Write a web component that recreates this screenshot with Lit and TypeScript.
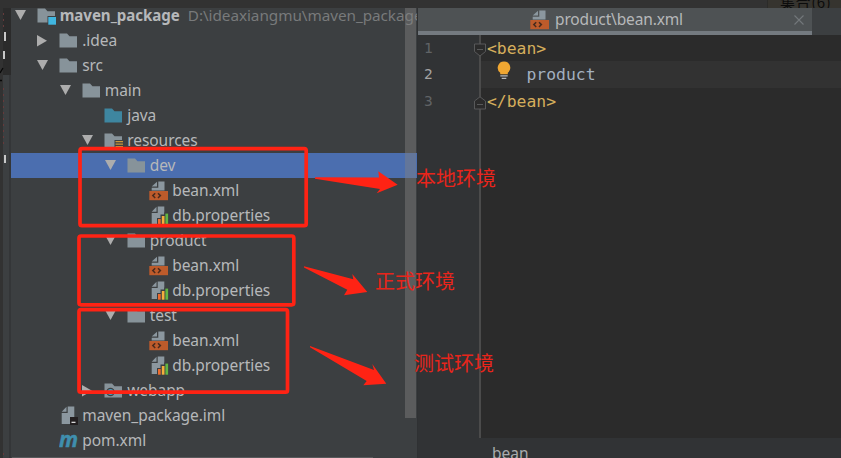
import { LitElement, html, css, svg, nothing } from 'lit';
import { customElement, property } from 'lit/decorators.js';
import { classMap } from 'lit/directives/class-map.js';

type Icon = 'module' | 'folder' | 'source' | 'resources' | 'web' | 'xml' | 'props' | 'iml' | 'maven';

interface Node {
    name: string;
    icon: Icon;
    depth: number;
    arrow?: 'open' | 'closed';
    path?: string;
    selected?: boolean;
}

const NODES: Node[] = [
    { name: 'maven_package', icon: 'module', depth: 0, arrow: 'open', path: 'D:\\ideaxiangmu\\maven_package' },
    { name: '.idea', icon: 'folder', depth: 1, arrow: 'closed' },
    { name: 'src', icon: 'folder', depth: 1, arrow: 'open' },
    { name: 'main', icon: 'folder', depth: 2, arrow: 'open' },
    { name: 'java', icon: 'source', depth: 3 },
    { name: 'resources', icon: 'resources', depth: 3, arrow: 'open' },
    { name: 'dev', icon: 'folder', depth: 4, arrow: 'open', selected: true },
    { name: 'bean.xml', icon: 'xml', depth: 5 },
    { name: 'db.properties', icon: 'props', depth: 5 },
    { name: 'product', icon: 'folder', depth: 4, arrow: 'open' },
    { name: 'bean.xml', icon: 'xml', depth: 5 },
    { name: 'db.properties', icon: 'props', depth: 5 },
    { name: 'test', icon: 'folder', depth: 4, arrow: 'open' },
    { name: 'bean.xml', icon: 'xml', depth: 5 },
    { name: 'db.properties', icon: 'props', depth: 5 },
    { name: 'webapp', icon: 'web', depth: 3, arrow: 'closed' },
    { name: 'maven_package.iml', icon: 'iml', depth: 1 },
    { name: 'pom.xml', icon: 'maven', depth: 1 },
];

const folder = (fill: string) => svg`<path fill=${fill} d="M0.5 2.5H8L10.5 5.2H18V16.5H0.5Z"/>`;
const page = svg`<path fill="#8b979f" d="M8.7 0.5H15.3V18H2.7V7H8.7Z"/><path fill="#8b979f" d="M7.5 0.8V5.7H2.7Z"/>`;

const ICONS: Record<Icon, unknown> = {
    module: svg`${folder('#87939a')}<rect x="10.5" y="10" width="9.5" height="9.5" fill="#3c3f41"/><rect x="11.3" y="11" width="7.7" height="7.7" fill="#40b6e0"/>`,
    folder: folder('#87939a'),
    source: folder('#3e86a0'),
    resources: svg`${folder('#87939a')}<rect x="10.5" y="9" width="9" height="9" fill="#3c3f41"/><path stroke="#c9973a" stroke-width="1.3" d="M11.5 10.6H19M11.5 13.1H19M11.5 15.6H19"/>`,
    web: svg`${folder('#87939a')}<circle cx="6.5" cy="11" r="4.2" fill="#3c3f41"/><circle cx="6.5" cy="11" r="3" fill="#4a9dc0"/>`,
    xml: svg`<path fill="#8b979f" d="M9.3 0.5H15.5V9.5H2.7V6.8H9.3Z"/><path fill="#8b979f" d="M8 0.8V5.6H2.7Z"/><rect x="0.3" y="10" width="18.7" height="9.2" fill="#bd5b2b"/><path fill="none" stroke="#4a2b1d" stroke-width="1.5" d="M6.2 12.2L3.8 14.6L6.2 17M9 12.2L11.4 14.6L9 17"/>`,
    props: svg`${page}<path fill="#3c3f41" d="M8 12H11.5V8.5H15.3V6.5H20V19.5H8Z"/><rect x="9" y="13" width="2.7" height="5.7" fill="#ec6b2d"/><rect x="12.8" y="10" width="2.7" height="8.7" fill="#f4af3d"/><rect x="16.4" y="7.6" width="2.7" height="11.1" fill="#62b543"/>`,
    iml: svg`${page}<rect x="11" y="11" width="8" height="8" fill="#231f20"/><rect x="12.5" y="15.7" width="4" height="1.3" fill="#d8d8d8"/>`,
    maven: svg`<text x="0" y="15.6" fill="#3f8fae" stroke="#3f8fae" stroke-width="0.5" font-family="Open Sans, Noto Sans, sans-serif" font-size="22" font-weight="700" font-style="italic" textLength="19" lengthAdjust="spacingAndGlyphs">m</text>`,
};

@customElement('file-icon')
export class FileIcon extends LitElement {
    @property() name: Icon = 'folder';

    static styles = css`
        :host {
            display: block;
            width: 20px;
            height: 20px;
        }
        svg {
            display: block;
        }
    `;

    render() {
        return html`<svg width="20" height="20" viewBox="0 0 20 20">${ICONS[this.name]}</svg>`;
    }
}

@customElement('project-tree')
export class ProjectTree extends LitElement {
    static styles = css`
        :host {
            display: block;
            overflow: hidden;
            position: relative;
            background: #3c3f41;
            font: 15.5px/25px 'Noto Sans', sans-serif;
            letter-spacing: -0.05px;
            color: #b6b8ba;
        }
        .rows {
            margin-top: -5px;
        }
        .row {
            display: flex;
            align-items: center;
            height: 25px;
            white-space: nowrap;
        }
        .row.selected {
            background: #4b6eaf;
        }
        .arrow {
            flex: none;
            width: 22px;
            height: 12px;
            margin-left: 3.6px;
        }
        file-icon {
            flex: none;
            margin-right: 3.1px;
        }
        .name.root {
            font-weight: 700;
            font-size: 15.1px;
        }
        .path {
            margin-left: 8px;
            color: #787a7b;
            font-size: 15.3px;
        }
        .scroll {
            position: absolute;
            top: 0;
            right: 1px;
            width: 11px;
            height: 410px;
            background: rgba(128, 128, 128, 0.45);
        }
        .hscroll {
            position: absolute;
            left: 1px;
            bottom: 0;
            width: 361px;
            height: 1px;
            background: #585a5c;
        }
    `;

    renderRow(node: Node) {
        return html`
            <div class=${classMap({ row: true, selected: !!node.selected })} style="padding-left:${node.depth * 22.5}px">
                <svg class="arrow" viewBox="0 0 22 12">
                    ${node.arrow === 'open' ? svg`<path fill="#adadad" d="M0 0H11L5.5 10Z"/>` : nothing}
                    ${node.arrow === 'closed' ? svg`<path fill="#adadad" d="M0 0L10 5.8L0 11.6Z"/>` : nothing}
                </svg>
                <file-icon name=${node.icon}></file-icon>
                <span class=${classMap({ name: true, root: node.depth === 0 })}>${node.name}</span>
                ${node.path ? html`<span class="path">${node.path}</span>` : nothing}
            </div>
        `;
    }

    render() {
        return html`
            <div class="rows">${NODES.map((n) => this.renderRow(n))}</div>
            <div class="scroll"></div>
            <div class="hscroll"></div>
        `;
    }
}

@customElement('code-editor')
export class CodeEditor extends LitElement {
    static styles = css`
        :host {
            display: flex;
            flex-direction: column;
            overflow: hidden;
            background: #2b2b2b;
        }
        .tabs {
            display: flex;
            height: 27px;
            background: #3c3f41;
        }
        .tab {
            box-sizing: border-box;
            display: flex;
            align-items: center;
            width: 394px;
            padding: 0 8px 0 112px;
            border-bottom: 4px solid #747a80;
            background: #4e5254;
            color: #b6b8ba;
            font: 15.5px/23px 'Noto Sans', sans-serif;
            letter-spacing: -0.15px;
        }
        .tab .title {
            flex: 1;
            margin-left: 5px;
        }
        .code {
            flex: 1;
            display: grid;
            grid-template-columns: 61px 2px 1fr;
            grid-template-rows: 26px 27px 26px 1fr;
            font: 16.4px/27px 'DejaVu Sans Mono', monospace;
        }
        .num {
            padding-left: 6px;
            background: #313335;
            color: #606366;
            font-size: 14.5px;
        }
        .num.current {
            color: #a4a3a3;
        }
        .fold {
            position: relative;
            background: #4b4b4b;
        }
        .fold svg {
            position: absolute;
            left: -5px;
            top: 8px;
        }
        .line {
            padding-left: 6px;
            white-space: pre;
            color: #d5ae5c;
        }
        .line.current {
            position: relative;
            background: #323232;
            color: #a3b0c0;
        }
        .bulb {
            position: absolute;
            left: 16px;
            top: 0;
        }
        .crumbs {
            height: 20px;
            overflow: hidden;
            padding-left: 74px;
            background: #313335;
            color: #a9abad;
            font: 15.5px/31px 'Noto Sans', sans-serif;
        }
    `;

    render() {
        return html`
            <div class="tabs">
                <div class="tab">
                    <file-icon name="xml"></file-icon>
                    <span class="title">product\\bean.xml</span>
                    <svg width="10" height="10"><path stroke="#73787b" stroke-width="1.1" d="M0.5 0.5L9.5 9.5M9.5 0.5L0.5 9.5" /></svg>
                </div>
            </div>
            <div class="code">
                <div class="num">1</div>
                <div class="fold">
                    <svg width="12" height="14"><path fill="#2b2b2b" stroke="#58595a" d="M0.5 1H11.5V8.5L6 13L0.5 8.5ZM3 6.5H9" /></svg>
                </div>
                <div class="line">&lt;bean&gt;</div>
                <div class="num current">2</div>
                <div class="fold"></div>
                <div class="line current">    product<svg class="bulb" width="14" height="20"><path fill="#f0a732" d="M7 0.5A6.3 6.3 0 0 0 3.2 11.8V13.2H10.8V11.8A6.3 6.3 0 0 0 7 0.5Z" /><path stroke="#b7b9bb" stroke-width="1.3" d="M3.3 14.9H10.7M4.7 17.3H9.3" /></svg></div>
                <div class="num">3</div>
                <div class="fold">
                    <svg width="12" height="14"><path fill="#2b2b2b" stroke="#58595a" d="M0.5 13H11.5V5L6 0.8L0.5 5ZM3 8.5H9" /></svg>
                </div>
                <div class="line">&lt;/bean&gt;</div>
                <div class="num"></div>
                <div class="fold"></div>
                <div class="line"></div>
            </div>
            <div class="crumbs">bean</div>
        `;
    }
}

@customElement('app-root')
export class AppRoot extends LitElement {
    static styles = css`
        :host {
            display: grid;
            grid-template-columns: 11px 406px 1px 423px;
            grid-template-rows: 8px 450px;
            width: 841px;
            height: 458px;
            position: relative;
            overflow: hidden;
            background: #323232;
        }
        .top {
            grid-column: 1 / -1;
            display: flex;
            justify-content: flex-end;
            overflow: hidden;
        }
        .bookmark {
            width: 61px;
            padding-left: 12px;
            border-left: 1px solid #2b2b29;
            background: #36342f;
            color: #0c0c0c;
            font: 15px/20px 'Noto Sans CJK SC', sans-serif;
            letter-spacing: 0.6px;
            margin-top: -8px;
            height: 16px;
            white-space: nowrap;
        }
        .strip {
            display: block;
        }
        .divider {
            background: #2f3133;
        }
        .notes {
            position: absolute;
            inset: 0;
            fill: #ff2314;
            font: 20px 'Noto Sans CJK SC', sans-serif;
        }
        .notes rect {
            fill: none;
            stroke: #ff2314;
            stroke-width: 3.7;
        }
        .notes text {
            fill: #e8251b;
        }
    `;

    render() {
        return html`
            <div class="top"><div class="bookmark">集合(6)</div></div>
            <svg class="strip" width="11" height="450">
                <rect x="3" width="8" height="67" fill="#2b2b2b" />
                <rect x="3" y="67" width="6" height="383" fill="#3c3f41" />
                <rect x="9" y="67" width="2" height="383" fill="#343638" />
                <path stroke="#653a3b" stroke-dasharray="2 4" d="M3.5 5V22M3.5 80V140M3.5 445V450" />
                <path stroke="#c8c8c8" stroke-width="2" d="M5 24V33M4 43V51M5 147V155" />
                <path stroke="#080808" stroke-width="1.3" d="M0 65L3 60M0 72.5H2" />
            </svg>
            <project-tree></project-tree>
            <div class="divider"></div>
            <code-editor></code-editor>
            <svg class="notes" width="841" height="458">
                <rect x="80" y="148.7" width="226.2" height="77" rx="2" />
                <rect x="79" y="236" width="214.8" height="68.8" rx="2" />
                <rect x="79" y="309.7" width="208.5" height="82.5" rx="2" />
                <path d="M315 177.2L379 177.4L378.3 171.3L397.7 184.7L376.7 193.3L380 189L315 178.7Z" />
                <path d="M304 266.3L353.3 279.3L352.3 274L367.3 292L344 295.2L347.3 289.7L304 267.5Z" />
                <path d="M310 346L374 370L372.3 364L386.3 383.7L363.3 385.3L366.7 381L310 347.2Z" />
                <text x="416" y="185.5">本地环境</text>
                <text x="375" y="288.5">正式环境</text>
                <text x="414" y="371">测试环境</text>
            </svg>
        `;
    }
}
